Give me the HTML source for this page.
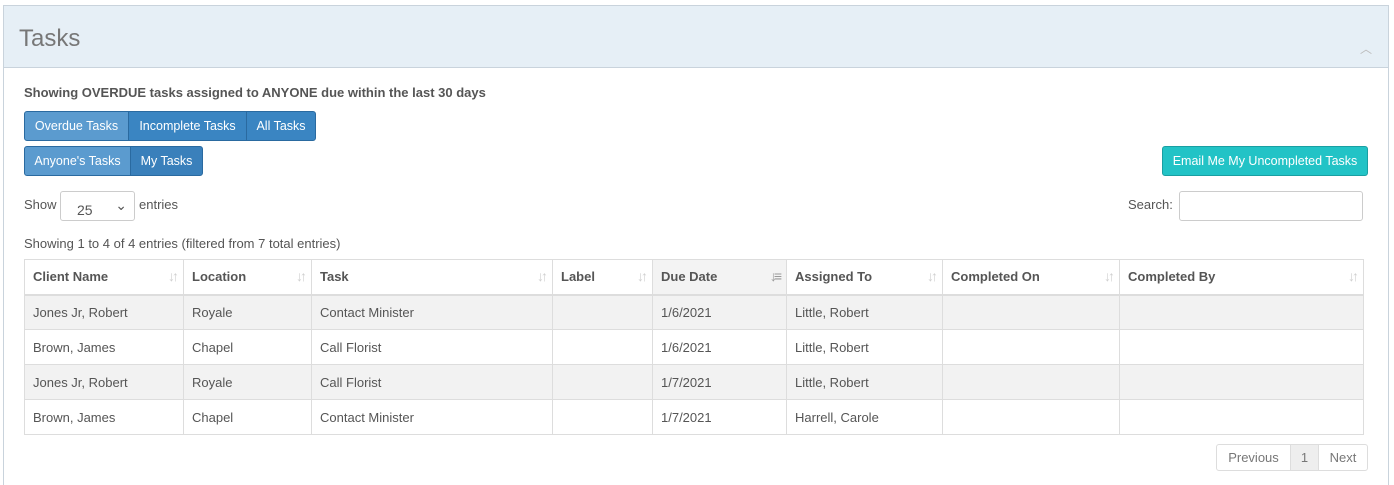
<!DOCTYPE html>
<html><head><style>
*{box-sizing:border-box;margin:0;padding:0}
html,body{width:1394px;height:485px;overflow:hidden}
body{background:#fff;font-family:"Liberation Sans",sans-serif;font-size:13px;color:#555;position:relative}
.a{position:absolute}
.panel{left:3px;top:5px;width:1386px;height:480px;border:1px solid #c9d3dc;border-bottom:none}
.hdr{left:4px;top:6px;width:1384px;height:62px;background:#e6eff6;border-bottom:1px solid #c9d3dc}
.btn{position:absolute;height:30px;line-height:28px;color:#fff;font-size:12.5px;text-align:center;border:1px solid #2a6aa0}
table{position:absolute;left:24px;top:259px;width:1340px;border-collapse:collapse}
td,th{border:1px solid #ddd;height:35px;padding:0 8px;text-align:left;white-space:nowrap}
th{font-weight:bold;color:#555;position:relative;border-bottom:2px solid #ddd}
th span{position:absolute;right:7px;top:8px;color:#d0d0d0;font-size:14px;font-weight:bold;letter-spacing:-3px}
tr.o td{background:#f2f2f2}
</style></head><body>
<div class="a panel"></div>
<div class="a hdr"></div>
<div class="a" style="left:19px;top:25px;font-size:24px;color:#777;font-weight:300">Tasks</div>
<div class="a" style="left:1360px;top:40px;color:#bbb;font-size:12px">︿</div>
<div class="a" style="left:24px;top:85px;font-weight:bold;color:#555">Showing OVERDUE tasks assigned to ANYONE due within the last 30 days</div>
<div class="btn" style="left:24px;top:111px;width:105px;background:#5b9bcf;border-radius:3px 0 0 3px">Overdue Tasks</div>
<div class="btn" style="left:128px;top:111px;width:119px;background:#3a85c2">Incomplete Tasks</div>
<div class="btn" style="left:246px;top:111px;width:70px;background:#3a85c2;border-radius:0 3px 3px 0">All Tasks</div>
<div class="btn" style="left:24px;top:146px;width:107px;background:#5b9bcf;border-radius:3px 0 0 3px">Anyone's Tasks</div>
<div class="btn" style="left:130px;top:146px;width:73px;background:#3a80bb;border-radius:0 3px 3px 0">My Tasks</div>
<div class="btn" style="left:1162px;top:146px;width:206px;background:#22c3c6;border-color:#1a9fa2;border-radius:3px">Email Me My Uncompleted Tasks</div>
<div class="a" style="left:24px;top:197px">Show</div>
<div class="a" style="left:60px;top:191px;width:75px;height:30px;border:1px solid #ccc;border-radius:3px;padding:10px 0 0 16px;font-size:14px">25<span style="position:absolute;right:7px;top:5px;font-size:14px">&#8964;</span></div>
<div class="a" style="left:139px;top:197px">entries</div>
<div class="a" style="left:1128px;top:197px">Search:</div>
<div class="a" style="left:1179px;top:191px;width:184px;height:30px;border:1px solid #ccc;border-radius:3px"></div>
<div class="a" style="left:24px;top:236px">Showing 1 to 4 of 4 entries (filtered from 7 total entries)</div>
<table>
<tr><th style="width:159px">Client Name<span>↓↑</span></th><th style="width:128px">Location<span>↓↑</span></th><th style="width:241px">Task<span>↓↑</span></th><th style="width:100px">Label<span>↓↑</span></th><th style="width:134px;background:#f3f3f3">Due Date<span style="color:#999">↓≡</span></th><th style="width:156px">Assigned To<span>↓↑</span></th><th style="width:177px">Completed On<span>↓↑</span></th><th>Completed By<span>↓↑</span></th></tr>
<tr class="o"><td>Jones Jr, Robert</td><td>Royale</td><td>Contact Minister</td><td></td><td>1/6/2021</td><td>Little, Robert</td><td></td><td></td></tr>
<tr><td>Brown, James</td><td>Chapel</td><td>Call Florist</td><td></td><td>1/6/2021</td><td>Little, Robert</td><td></td><td></td></tr>
<tr class="o"><td>Jones Jr, Robert</td><td>Royale</td><td>Call Florist</td><td></td><td>1/7/2021</td><td>Little, Robert</td><td></td><td></td></tr>
<tr><td>Brown, James</td><td>Chapel</td><td>Contact Minister</td><td></td><td>1/7/2021</td><td>Harrell, Carole</td><td></td><td></td></tr>
</table>
<div class="a" style="left:1216px;top:444px;width:152px;height:27px;border:1px solid #ddd;border-radius:3px;display:flex;line-height:25px;color:#777">
<div style="width:74px;text-align:center;border-right:1px solid #ddd">Previous</div>
<div style="width:28px;text-align:center;background:#eee;border-right:1px solid #ddd">1</div>
<div style="flex:1;text-align:center">Next</div></div>
</body></html>
